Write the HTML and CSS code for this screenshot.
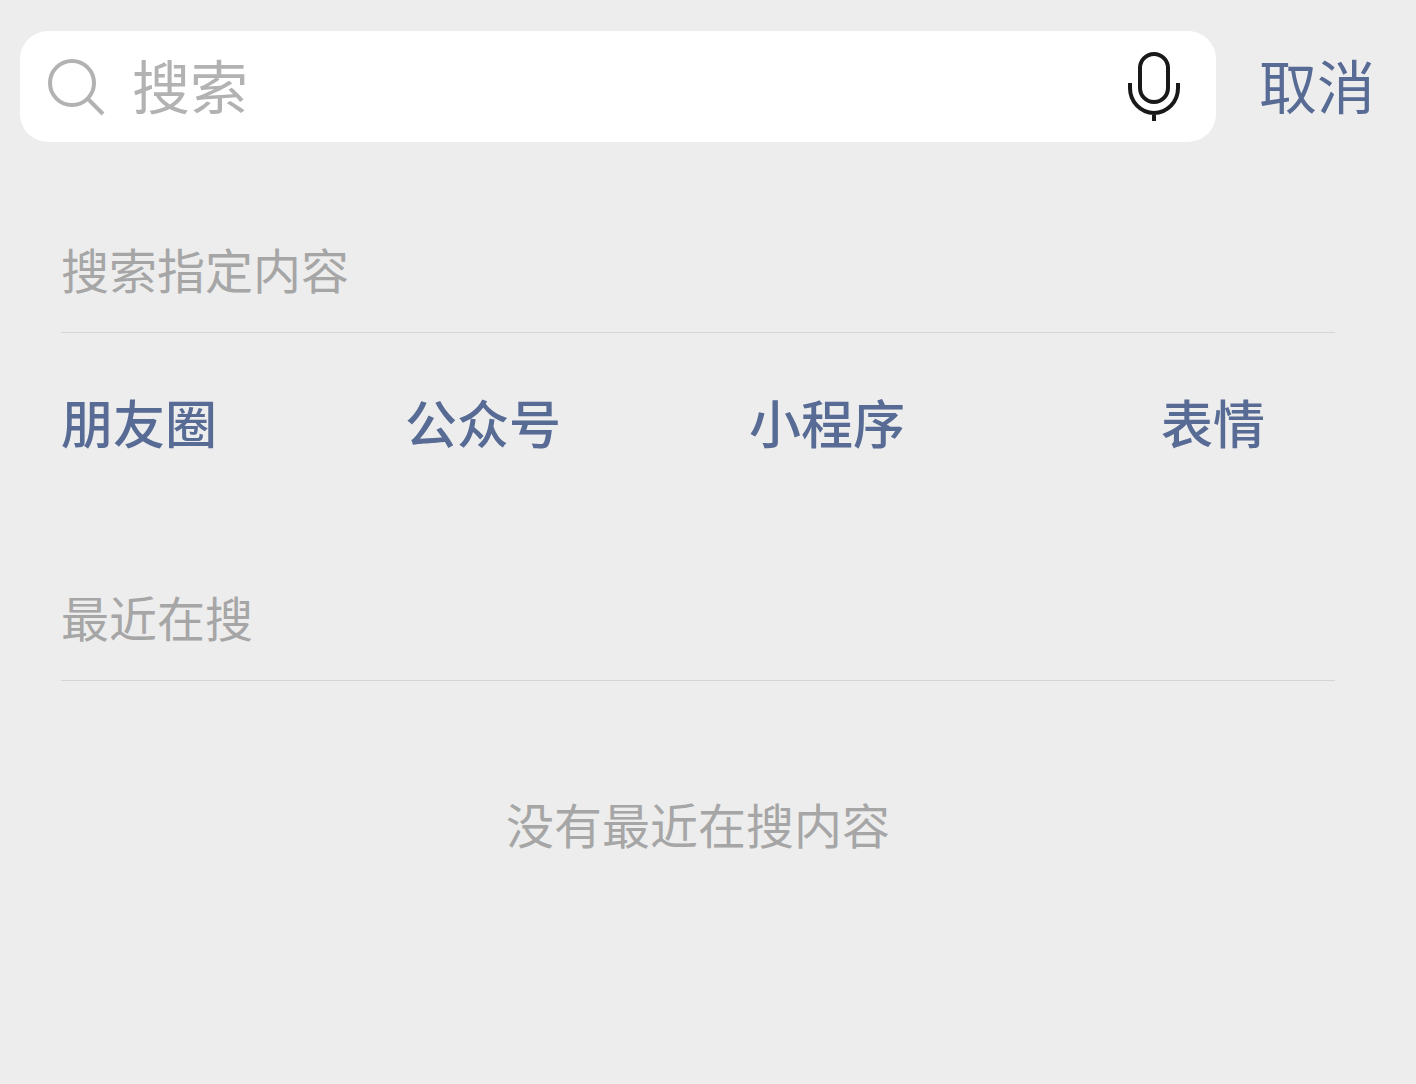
FILE: index.html
```html
<!DOCTYPE html>
<html lang="zh-CN">
<head>
<meta charset="utf-8">
<meta name="viewport" content="width=device-width, initial-scale=1">
<title>搜索</title>
<link rel="stylesheet" href="styles.css">
</head>
<body>
<header class="topbar">
  <form class="search" role="search">
    <svg class="search-icon" viewBox="0 0 60 60" aria-hidden="true">
      <circle cx="26" cy="26" r="22"/>
      <path d="M41.500 41.500L57 57"/>
    </svg>
    <input class="search-input" type="text" placeholder="搜索" aria-label="搜索">
    <button class="voice" type="button" aria-label="语音输入">
      <svg class="voice-icon" viewBox="0 0 54 70" aria-hidden="true">
        <rect x="13" y="2" width="28" height="48" rx="14"/>
        <path d="M3 31v5a24 25 0 0 0 48 0v-5M27 61v8"/>
      </svg>
    </button>
  </form>
  <button class="cancel" type="button">取消</button>
</header>
<main class="content">
  <section class="section">
    <h2 class="heading">搜索指定内容</h2>
    <nav class="links" aria-label="搜索指定内容">
      <a class="link" href="#moments">朋友圈</a>
      <a class="link" href="#accounts">公众号</a>
      <a class="link" href="#programs">小程序</a>
      <a class="link link-last" href="#stickers">表情</a>
    </nav>
  </section>
  <section class="section">
    <h2 class="heading">最近在搜</h2>
    <p class="empty">没有最近在搜内容</p>
  </section>
</main>
</body>
</html>
```
FILE: styles.css
```css
* {
  box-sizing: border-box;
}

body {
  margin: 0;
  background: #ededed;
  font-family: "Noto Sans CJK SC", sans-serif;
}

button,
input {
  padding: 0;
  border: 0;
  background: none;
  font-family: inherit;
}

.topbar {
  display: flex;
  align-items: center;
  gap: 43px;
  padding: 31px 41px 0 20px;
}

.search {
  display: flex;
  flex: 1;
  align-items: center;
  min-width: 0;
  padding: 13px 35px 12px 26px;
  border-radius: 28px;
  background: #fff;
}

.search-icon {
  flex: none;
  width: 60px;
  height: 60px;
  margin-right: 26px;
  fill: none;
  stroke: #b2b2b2;
  stroke-width: 4;
}

.search-input {
  flex: 1;
  min-width: 0;
  height: 86px;
  padding-bottom: 6px;
  color: #191919;
  font-size: 58px;
  outline: none;
}

.search-input::placeholder {
  color: #b2b2b2;
  opacity: 1;
}

.voice-icon {
  display: block;
  width: 54px;
  height: 70px;
  fill: none;
  stroke: #191919;
  stroke-width: 4;
}

.cancel {
  padding-bottom: 6px;
  color: #576b95;
  font-size: 58px;
  line-height: 86px;
}

.content {
  padding: 96px 81px 0 61px;
}

.heading {
  margin: 0;
  padding-bottom: 34px;
  border-bottom: 1px solid #d5d5d5;
  color: #a6a6a6;
  font-size: 48px;
  font-weight: 400;
  line-height: 60px;
}

.links {
  display: grid;
  grid-template-columns: 27% 27% 1fr auto;
  padding: 57px 0 132px;
}

.link {
  color: #576b95;
  font-size: 52px;
  font-weight: 500;
  line-height: 64px;
  text-decoration: none;
}

.link-last {
  margin-right: 70px;
}

.empty {
  margin: 112px 0;
  color: #a6a6a6;
  font-size: 48px;
  line-height: 60px;
  text-align: center;
}
```
